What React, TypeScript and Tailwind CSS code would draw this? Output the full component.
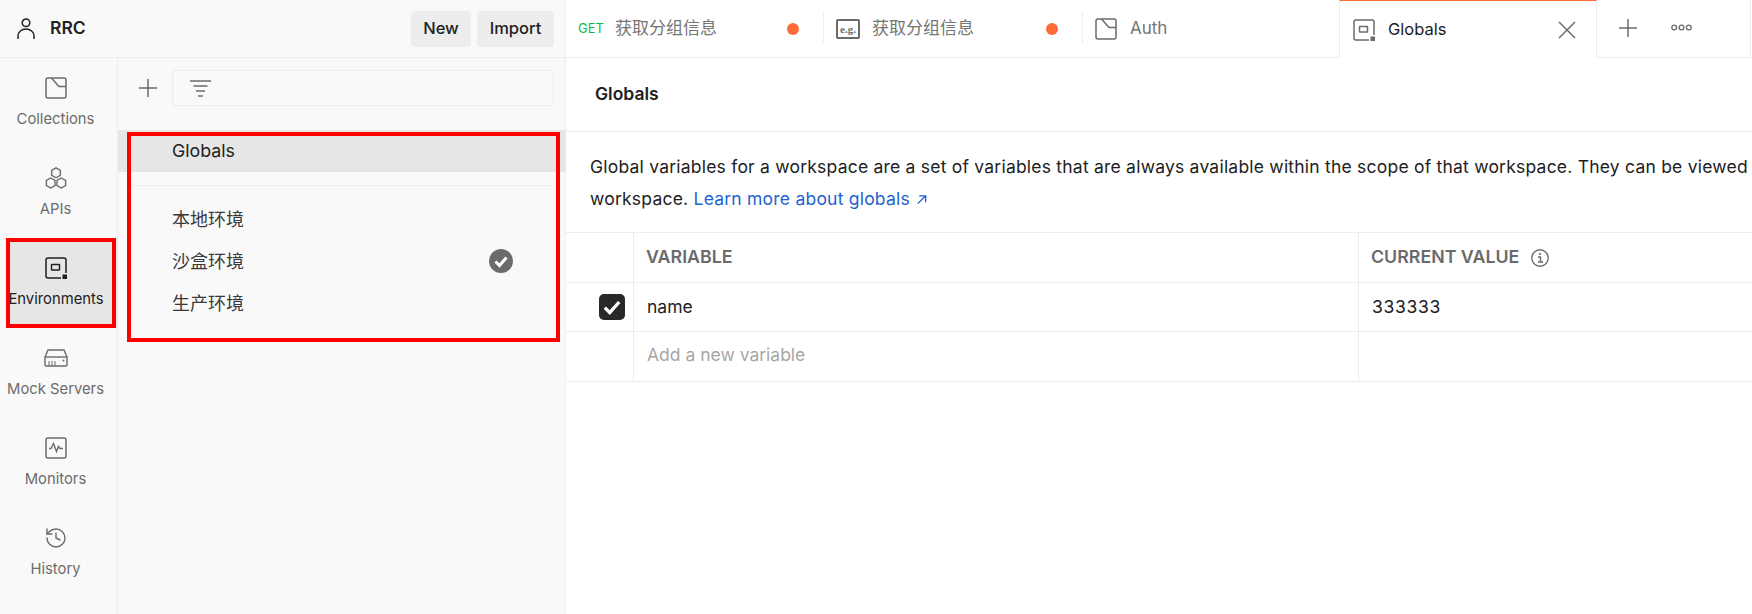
import { History } from "lucide-react";

const font = "font-['Inter','Noto_Sans_CJK_SC',sans-serif]";

function CollectionIcon({ className = "" }: { className?: string }) {
  return (
    <svg viewBox="0 0 22 22" className={className} fill="none" stroke="currentColor" strokeWidth="1.5">
      <rect x="1" y="1" width="20" height="20" rx="2" />
      <path d="M6.5 1 L14 9.5 H21" />
    </svg>
  );
}

function ApiIcon() {
  const hex = (cx: number, cy: number) => {
    const r = 5;
    const w = r * 0.866;
    return `M${cx} ${cy - r} L${cx + w} ${cy - r / 2} V${cy + r / 2} L${cx} ${cy + r} L${cx - w} ${cy + r / 2} V${cy - r / 2} Z`;
  };
  return (
    <svg viewBox="0 0 22 22" className="h-[22px] w-[22px]" fill="none" stroke="currentColor" strokeWidth="1.4">
      <path d={hex(11, 5.8)} />
      <path d={hex(5.7, 16)} />
      <path d={hex(16.3, 16)} />
    </svg>
  );
}

function EnvIcon({ className = "" }: { className?: string }) {
  return (
    <svg viewBox="0 0 22 22" className={className} fill="none" stroke="currentColor" strokeWidth="1.5">
      <path d="M16 21 H3 A2 2 0 0 1 1 19 V3 A2 2 0 0 1 3 1 H19 A2 2 0 0 1 21 3 V16" />
      <rect x="6.5" y="7.5" width="8" height="5.5" rx="0.5" />
      <rect x="17.5" y="17.5" width="4.5" height="4.5" fill="currentColor" stroke="none" />
    </svg>
  );
}

function MockIcon() {
  return (
    <svg viewBox="0 0 24 18" className="h-[18px] w-[24px]" fill="none" stroke="currentColor" strokeWidth="1.4">
      <path d="M1 8 L4 1 H20 L23 8 V16 A1 1 0 0 1 22 17 H2 A1 1 0 0 1 1 16 Z" />
      <path d="M1 8 H23" />
      <path d="M5 12 V17 M8 12 V17 M11 12 V17" strokeWidth="1" />
      <circle cx="19.5" cy="11.5" r="1" fill="currentColor" stroke="none" />
    </svg>
  );
}

function MonitorIcon() {
  return (
    <svg viewBox="0 0 22 22" className="h-[22px] w-[22px]" fill="none" stroke="currentColor" strokeWidth="1.5">
      <rect x="1" y="1" width="20" height="20" rx="2" />
      <path d="M4 11.5 H6 L8.5 6.5 L11.5 14.5 L13.5 9.5 L15 11.5 H18" strokeWidth="1.4" />
    </svg>
  );
}

function Plus() {
  return (
    <svg viewBox="0 0 18 18" className="h-[18px] w-[18px]" stroke="#6b6b6b" strokeWidth="1.5">
      <path d="M9 0 V18 M0 9 H18" />
    </svg>
  );
}

function NavItem({ label, icon, active }: { label: string; icon: React.ReactNode; active?: boolean }) {
  return (
    <div
      className={`flex h-[90px] flex-col items-center pt-[19px] ${active ? "ml-[6px] w-[111px] bg-[#e6e6e6] text-[#212121]" : "pr-[6px] text-[#6b6b6b]"}`}
    >
      <div className={`flex h-[22px] items-center ${active ? "-ml-[11px]" : ""}`}>{icon}</div>
      <div className={`mt-[10px] text-[14.8px] leading-5 whitespace-nowrap ${active ? "-ml-[11px]" : ""}`}>{label}</div>
    </div>
  );
}

function EnvRow({ name, selected }: { name: string; selected?: boolean }) {
  return (
    <div className="flex h-[42px] items-center justify-between pl-[54px] pr-[52px] text-[18px] text-[#3a3a3a]">
      <span>{name}</span>
      {selected && (
        <svg viewBox="0 0 24 24" className="h-[24px] w-[24px]">
          <circle cx="12" cy="12" r="12" fill="#6b6b6b" />
          <path d="M6.5 12.5 L10.5 16.5 L17.5 8.5" fill="none" stroke="#fff" strokeWidth="3" />
        </svg>
      )}
    </div>
  );
}

function RedBox({ className }: { className: string }) {
  return <div className={`pointer-events-none absolute border-[4px] border-[#ff0000] ${className}`} />;
}

function Dot({ className }: { className: string }) {
  return <span className={`h-[12px] w-[12px] rounded-full bg-[#ff6c37] ${className}`} />;
}

const tabText = "text-[17px] text-[#757575]";
const cellText = "text-[17.5px] text-[#212121]";
const headText = "text-[17.8px] font-semibold text-[#6b6b6b]";

function TableRow({ height, first, second, third }: { height: string; first?: React.ReactNode; second: React.ReactNode; third?: React.ReactNode }) {
  return (
    <div className={`grid grid-cols-[68px_725px_1fr] border-b border-[#ededed] ${height}`}>
      <div className="flex items-center border-r border-[#ededed] pl-[33px]">{first}</div>
      <div className="flex items-center border-r border-[#ededed] pl-[12px]">{second}</div>
      <div className="flex items-center pl-[12px]">{third}</div>
    </div>
  );
}

export default function App() {
  return (
    <div className={`relative flex h-[614px] w-[1752px] overflow-hidden bg-white ${font}`}>
      {/* left column */}
      <div className="flex w-[566px] shrink-0 flex-col border-r border-[#ededed] bg-[#f9f9f9]">
        <div className="flex h-[58px] shrink-0 items-center border-b border-[#ededed] pl-[17px] pr-[11px]">
          <svg viewBox="0 0 18 21" className="h-[21px] w-[18px]" fill="none" stroke="#212121" strokeWidth="1.5">
            <circle cx="9" cy="4.8" r="3.8" />
            <path d="M1 21 V18 A8 7 0 0 1 17 18 V21" />
          </svg>
          <span className="ml-[15px] text-[17.5px] font-semibold text-[#212121]">RRC</span>
          <div className="ml-auto flex gap-[6px]">
            <div className="flex h-[36px] w-[60px] items-center justify-center rounded-[4px] bg-[#ededed] text-[16.5px] font-medium text-[#212121]">New</div>
            <div className="flex h-[36px] w-[77px] items-center justify-center rounded-[4px] bg-[#ededed] text-[16.5px] font-medium text-[#212121]">Import</div>
          </div>
        </div>
        <div className="flex flex-1">
          <div className="w-[118px] shrink-0 border-r border-[#ededed]">
            <NavItem label="Collections" icon={<CollectionIcon className="h-[22px] w-[22px]" />} />
            <NavItem label="APIs" icon={<ApiIcon />} />
            <NavItem label="Environments" icon={<EnvIcon className="h-[22px] w-[22px]" />} active />
            <NavItem label="Mock Servers" icon={<MockIcon />} />
            <NavItem label="Monitors" icon={<MonitorIcon />} />
            <NavItem label="History" icon={<History size={24} strokeWidth={1.4} />} />
          </div>
          <div className="flex-1">
            <div className="flex h-[72px] items-start pt-[12px] pl-[21px] pr-[11px]">
              <div className="mr-[15px] mt-[9px]">
                <Plus />
              </div>
              <div className="flex h-[36px] flex-1 items-center rounded-[3px] border border-[#ededed] pl-[17px]">
                <svg viewBox="0 0 21 17" className="h-[17px] w-[21px]" stroke="#6b6b6b" strokeWidth="1.5">
                  <path d="M0 1 H21 M3.5 6 H17.5 M6 11 H15 M8 16 H13" />
                </svg>
              </div>
            </div>
            <div className="flex h-[42px] items-center bg-[#e6e6e6] pl-[54px] text-[17.8px] text-[#212121]">Globals</div>
            <div className="mx-[13px] mt-[13px] mb-[12px] border-t border-[#ededed]" />
            <EnvRow name="本地环境" />
            <EnvRow name="沙盒环境" selected />
            <EnvRow name="生产环境" />
          </div>
        </div>
      </div>

      {/* right column */}
      <div className="flex-1 overflow-hidden">
        <div className="mr-px flex h-[58px] border-b border-[#ededed]">
          <div className="flex h-[57px] w-[257px] shrink-0 items-center pl-[12px] pt-px">
            <span className="mr-[11px] text-[13px] text-[#0cbb52]">GET</span>
            <span className={tabText}>获取分组信息</span>
            <Dot className="ml-[70px]" />
          </div>
          <div className="mt-[12px] h-[31px] w-px bg-[#ededed]" />
          <div className="flex h-[57px] w-[258px] shrink-0 items-center pl-[12px] pt-px">
            <span className="mr-[12px] flex h-[20px] w-[24px] items-center justify-center rounded-[2px] border-2 border-[#6b6b6b] font-['Liberation_Serif',serif] text-[11px] font-bold text-[#6b6b6b]">e.g.</span>
            <span className={tabText}>获取分组信息</span>
            <Dot className="ml-[72px]" />
          </div>
          <div className="mt-[12px] h-[31px] w-px bg-[#ededed]" />
          <div className="flex h-[57px] w-[256px] shrink-0 items-center pl-[12px] pt-px text-[#6b6b6b]">
            <CollectionIcon className="mr-[13px] h-[22px] w-[22px]" />
            <span className={tabText}>Auth</span>
          </div>
          <div className="relative flex h-[58px] w-[258px] shrink-0 items-center border-x border-t border-x-[#ededed] border-t-[#ff6c37] bg-white pl-[13px] pr-[20px] text-[#6b6b6b]">
            <EnvIcon className="mr-[13px] h-[22px] w-[22px]" />
            <span className="text-[16.5px] text-[#212121]">Globals</span>
            <svg viewBox="0 0 18 18" className="ml-auto h-[18px] w-[18px]" stroke="#6b6b6b" strokeWidth="1.5">
              <path d="M1 1 L17 17 M17 1 L1 17" />
            </svg>
          </div>
          <div className="flex h-[55px] flex-1 items-center border-r border-[#ededed] pl-[22px]">
            <Plus />
            <svg viewBox="0 0 21 7" className="ml-[34px] h-[7px] w-[21px]" fill="none" stroke="#6b6b6b" strokeWidth="1.3">
              <circle cx="3.2" cy="3.5" r="2.4" />
              <circle cx="10.5" cy="3.5" r="2.4" />
              <circle cx="17.8" cy="3.5" r="2.4" />
            </svg>
          </div>
        </div>

        <div className="flex h-[74px] items-center border-b border-[#ededed] pl-[29px]">
          <span className="text-[17.5px] font-semibold text-[#212121]">Globals</span>
        </div>

        <div className="h-[100px] whitespace-nowrap pl-[24px] pt-[19px] text-[17.5px] leading-[32px] tracking-[0.22px] text-[#212121]">
          Global variables for a workspace are a set of variables that are always available within the scope of that workspace. They can be viewed
          <br />
          workspace.{" "}
          <span className="text-[#1d63d1]">
            Learn more about globals
            <svg viewBox="0 0 12 12" className="ml-[6px] inline-block h-[11px] w-[11px] align-baseline" fill="none" stroke="#1d63d1" strokeWidth="1.5">
              <path d="M2 10.5 L10 2.5 M3.5 2 H10.5 V9" />
            </svg>
          </span>
        </div>

        <div className="border-t border-[#ededed]">
          <TableRow
            height="h-[50px]"
            second={<span className={headText}>VARIABLE</span>}
            third={
              <span className="flex items-center">
                <span className={headText}>CURRENT VALUE</span>
                <svg viewBox="0 0 18 18" className="ml-[12px] h-[18px] w-[18px]" fill="none" stroke="#6b6b6b">
                  <circle cx="9" cy="9" r="8.2" strokeWidth="1.4" />
                  <path d="M7 8 H9.5 V13 M7 13 H12" strokeWidth="1.4" />
                  <circle cx="9" cy="5" r="1.1" fill="#6b6b6b" stroke="none" />
                </svg>
              </span>
            }
          />
          <TableRow
            height="h-[49px]"
            first={
              <span className="flex h-[26px] w-[26px] items-center justify-center rounded-[5px] bg-[#282828]">
                <svg viewBox="0 0 18 18" className="h-[20px] w-[20px]" fill="none" stroke="#fff" strokeWidth="3">
                  <path d="M2.5 9.5 L7 14 L15.5 4.5" />
                </svg>
              </span>
            }
            second={<span className={`ml-px ${cellText}`}>name</span>}
            third={<span className={`ml-px tracking-[0.7px] ${cellText}`}>333333</span>}
          />
          <TableRow
            height="h-[50px]"
            second={<span className="mb-[2px] ml-px text-[17.5px] text-[#a6a6a6]">Add a new variable</span>}
          />
        </div>
      </div>

      {/* annotation boxes drawn over the screenshot */}
      <RedBox className="left-[6px] top-[238px] h-[90px] w-[110px]" />
      <RedBox className="left-[127px] top-[132px] h-[210px] w-[433px]" />
    </div>
  );
}
